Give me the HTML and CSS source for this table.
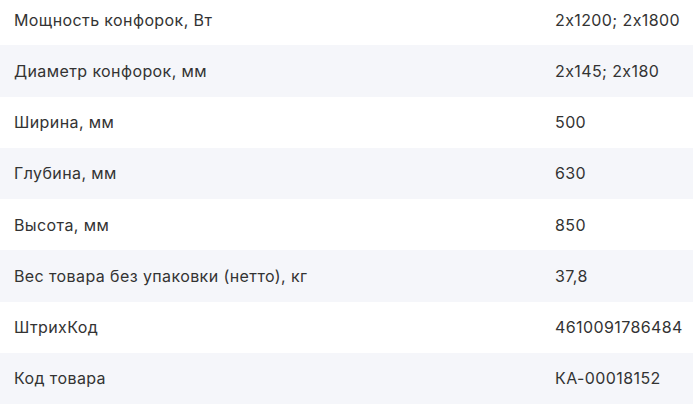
FILE: index.html
```html
<!DOCTYPE html>
<html lang="ru">
<head>
<meta charset="utf-8">
<link rel="stylesheet" href="styles.css">
</head>
<body>
<div class="specs">
  <div class="row"><div class="name">Мощность конфорок, Вт</div><div class="val">2x1200; 2x1800</div></div>
  <div class="row alt"><div class="name">Диаметр конфорок, мм</div><div class="val">2x145; 2x180</div></div>
  <div class="row"><div class="name">Ширина, мм</div><div class="val">500</div></div>
  <div class="row alt"><div class="name">Глубина, мм</div><div class="val">630</div></div>
  <div class="row"><div class="name">Высота, мм</div><div class="val">850</div></div>
  <div class="row alt"><div class="name">Вес товара без упаковки (нетто), кг</div><div class="val">37,8</div></div>
  <div class="row"><div class="name">ШтрихКод</div><div class="val">4610091786484</div></div>
  <div class="row alt"><div class="name">Код товара</div><div class="val">КА-00018152</div></div>
</div>
</body>
</html>
```

FILE: styles.css
```css
html, body {
  margin: 0;
  padding: 0;
  background: #ffffff;
}
.specs {
  margin-top: -6px;
  font-family: Inter, "Noto Sans", sans-serif;
  font-size: 16px;
  letter-spacing: 0.4px;
  font-feature-settings: "calt" 0;
  color: #333333;
}
.row {
  display: grid;
  grid-template-columns: 541px 1fr;
  height: 51.25px;
  align-items: center;
  padding-left: 14px;
}
.row.alt {
  background: #f5f6fa;
}
```
